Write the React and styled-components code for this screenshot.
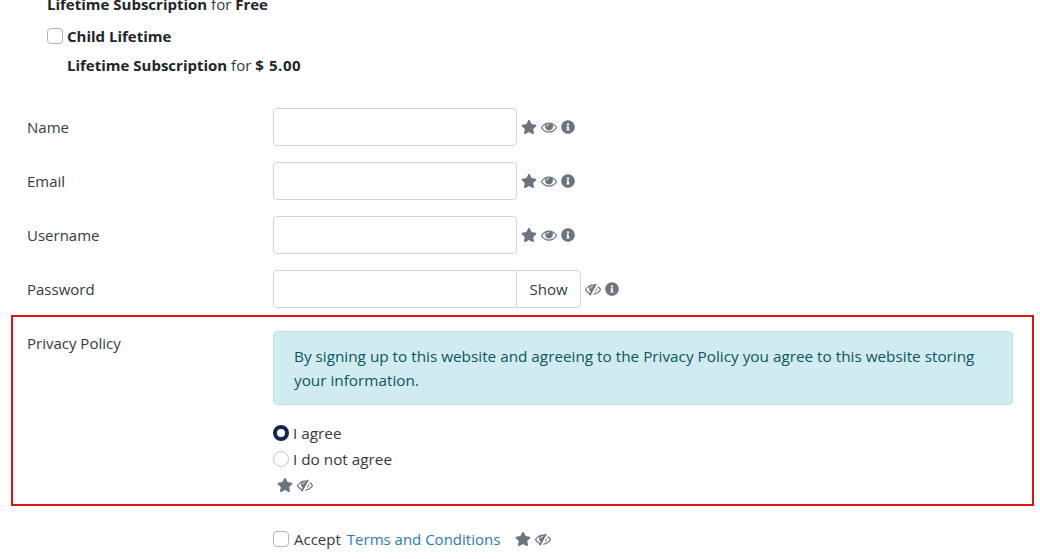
import React from 'react';
import styled, { createGlobalStyle } from 'styled-components';
import { FaStar, FaInfoCircle } from 'react-icons/fa';

const GlobalStyle = createGlobalStyle`
  html, body {
    margin: 0;
    background: #fff;
    overflow: hidden;
  }
  body {
    font-family: "Open Sans", "Liberation Sans", sans-serif;
    font-size: 15.3px;
    line-height: 24px;
    color: #212529;
  }
`;

// styles
const Page = styled.div`
  width: 1040px;
  height: 559px;
  overflow: hidden;
  box-sizing: border-box;
  padding-left: 11px;
`;

const Plans = styled.div`
  margin-top: -13px;
  padding-left: 36px;
  margin-bottom: 31px;
`;

const PlanName = styled.label`
  display: flex;
  align-items: center;
  gap: 4px;
  height: 24px;
  margin-top: 8px;
  font-size: 15px;
  font-weight: 700;
`;

const PlanPrice = styled.div`
  height: 24px;
  margin-top: 5px;
  padding-left: ${props => (props.indented ? '20px' : '0')};
  color: #343a40;
  font-size: 15px;
  font-weight: 400;

  strong {
    color: #212529;
    font-weight: 700;
  }
`;

const Amount = styled.strong`
  letter-spacing: 0.6px;
`;

const Row = styled.div`
  display: grid;
  grid-template-columns: 246px 1fr;
  align-items: center;
  padding-left: 16px;
  margin-bottom: ${props => props.bottom ?? 16}px;
`;

const Label = styled.div`
  color: #343a40;
  font-size: 15px;
`;

const Controls = styled.div`
  display: flex;
  align-items: center;
`;

const Input = styled.input`
  width: 244px;
  height: 38px;
  box-sizing: border-box;
  border: 1px solid #ced4da;
  border-radius: ${props => (props.joined ? '4px 0 0 4px' : '4px')};
  background: #fff;
`;

const ShowButton = styled.div`
  width: 65px;
  height: 38px;
  box-sizing: border-box;
  margin-left: -1px;
  border: 1px solid #ced4da;
  border-radius: 0 4px 4px 0;
  display: flex;
  align-items: center;
  justify-content: center;
  color: #343a40;
  font-size: 15px;
`;

const Icons = styled.div`
  display: flex;
  align-items: center;
  gap: ${props => props.gap ?? 4}px;
  height: ${props => (props.tall ? '26px' : 'auto')};
  margin-left: ${props => props.offset ?? 4}px;
  color: #6c757d;

  svg {
    display: block;
    flex: none;
  }
`;

const Highlight = styled.section`
  width: 1023px;
  height: 191px;
  box-sizing: border-box;
  border: 2px solid #d91414;
  padding: 14px 19px 0 14px;
  display: grid;
  grid-template-columns: 246px 1fr;
  align-items: start;
`;

const Notice = styled.div`
  box-sizing: border-box;
  height: 74px;
  padding: 12px 20px;
  border: 1px solid #bee5eb;
  border-radius: 4px;
  background: #d1ecf1;
  color: #0c5460;
  margin-bottom: 15px;
`;

const RadioRow = styled.label`
  display: flex;
  align-items: center;
  gap: 4px;
  height: 26px;
  color: #343a40;
`;

const Radio = styled.span`
  width: 16px;
  height: 16px;
  box-sizing: border-box;
  border-radius: 50%;
  border: ${props => (props.checked ? '4px solid #12264f' : '1px solid #c4c9ce')};
  background: #fff;
`;

const Checkbox = styled.span`
  display: block;
  flex: none;
  width: 16px;
  height: 16px;
  box-sizing: border-box;
  border: 1px solid #adb5bd;
  border-radius: 4px;
  background: #fff;
`;

const Terms = styled.div`
  display: flex;
  align-items: center;
  height: 24px;
  margin: 21px 0 0 262px;
  color: #343a40;
  font-size: 15px;
`;

const TermsText = styled.span`
  margin-left: 5px;
`;

const TermsLink = styled.a`
  color: #2a7ab8;
  margin-left: 6px;
`;

const EyeIcon = () => (
  <svg width="16" height="16" viewBox="0 0 1792 1792" fill="currentColor">
    <path d="M1664 960q-152-236-381-353 61 104 61 225 0 185-131.500 316.500t-316.500 131.500-316.500-131.500-131.500-316.500q0-121 61-225-229 117-381 353 133 205 333.500 326.500t434.500 121.500 434.500-121.500 333.500-326.500zm-720-384q0-20-14-34t-34-14q-125 0-214.500 89.500t-89.500 214.500q0 20 14 34t34 14 34-14 14-34q0-86 61-147t147-61q20 0 34-14t14-34zm848 384q0 34-20 69-140 230-376.500 368.500t-499.500 138.500-499.500-139-376.500-368q-20-35-20-69t20-69q140-229 376.500-368t499.500-139 499.500 139 376.500 368q20 35 20 69z" />
  </svg>
);

const EyeOffIcon = () => (
  <svg width="16" height="16" viewBox="0 0 1792 1792" fill="currentColor">
    <path d="M555 1335l78-141q-87-63-136-159t-49-203q0-121 61-225-229 117-381 353 167 258 427 375zm389-759q0-20-14-34t-34-14q-125 0-214.500 89.500t-89.500 214.500q0 20 14 34t34 14 34-14 14-34q0-86 61-147t147-61q20 0 34-14t14-34zm363-191q0 7-1 9-106 189-316 567t-315 566l-49 89q-10 16-28 16-12 0-134-70-16-10-16-28 0-12 44-87-143-65-263.500-173t-208.500-245q-20-31-20-69t20-69q153-235 380-371t496-136q89 0 180 17l54-97q10-16 28-16 5 0 18 6t31 15.500 33 18.500 31.500 18.500 19.500 11.500q16 10 16 27zm37 447q0 139-79 253.500t-209 164.500l280-502q8 45 8 84zm448 128q0 35-20 69-39 64-109 145-150 172-347.500 267t-419.500 95l74-132q212-18 392.500-137t301.500-307q-115-179-282-294l63-112q95 64 182.500 153t144.500 184q20 34 20 69z" />
  </svg>
);

const fields = ['Name', 'Email', 'Username'];

// component
const App = () => (
  <Page>
    <GlobalStyle />
    <Plans>
      <PlanPrice><strong>Lifetime Subscription</strong> for <strong>Free</strong></PlanPrice>
      <PlanName><Checkbox />Child Lifetime</PlanName>
      <PlanPrice indented><strong>Lifetime Subscription</strong> for <Amount>$ 5.00</Amount></PlanPrice>
    </Plans>

    {fields.map(field => (
      <Row key={field}>
        <Label>{field}</Label>
        <Controls>
          <Input />
          <Icons><FaStar size={16} /><EyeIcon /><FaInfoCircle size={14} /></Icons>
        </Controls>
      </Row>
    ))}

    <Row bottom={7}>
      <Label>Password</Label>
      <Controls>
        <Input joined />
        <ShowButton>Show</ShowButton>
        <Icons><EyeOffIcon /><FaInfoCircle size={14} /></Icons>
      </Controls>
    </Row>

    <Highlight>
      <Label>Privacy Policy</Label>
      <div>
        <Notice>
          By signing up to this website and agreeing to the Privacy Policy you agree to this website storing your information.
        </Notice>
        <RadioRow><Radio checked />I agree</RadioRow>
        <RadioRow><Radio />I do not agree</RadioRow>
        <Icons tall><FaStar size={16} /><EyeOffIcon /></Icons>
      </div>
    </Highlight>

    <Terms>
      <Checkbox />
      <TermsText>Accept</TermsText>
      <TermsLink>Terms and Conditions</TermsLink>
      <Icons offset={15}><FaStar size={16} /><EyeOffIcon /></Icons>
    </Terms>
  </Page>
);

export default App;
